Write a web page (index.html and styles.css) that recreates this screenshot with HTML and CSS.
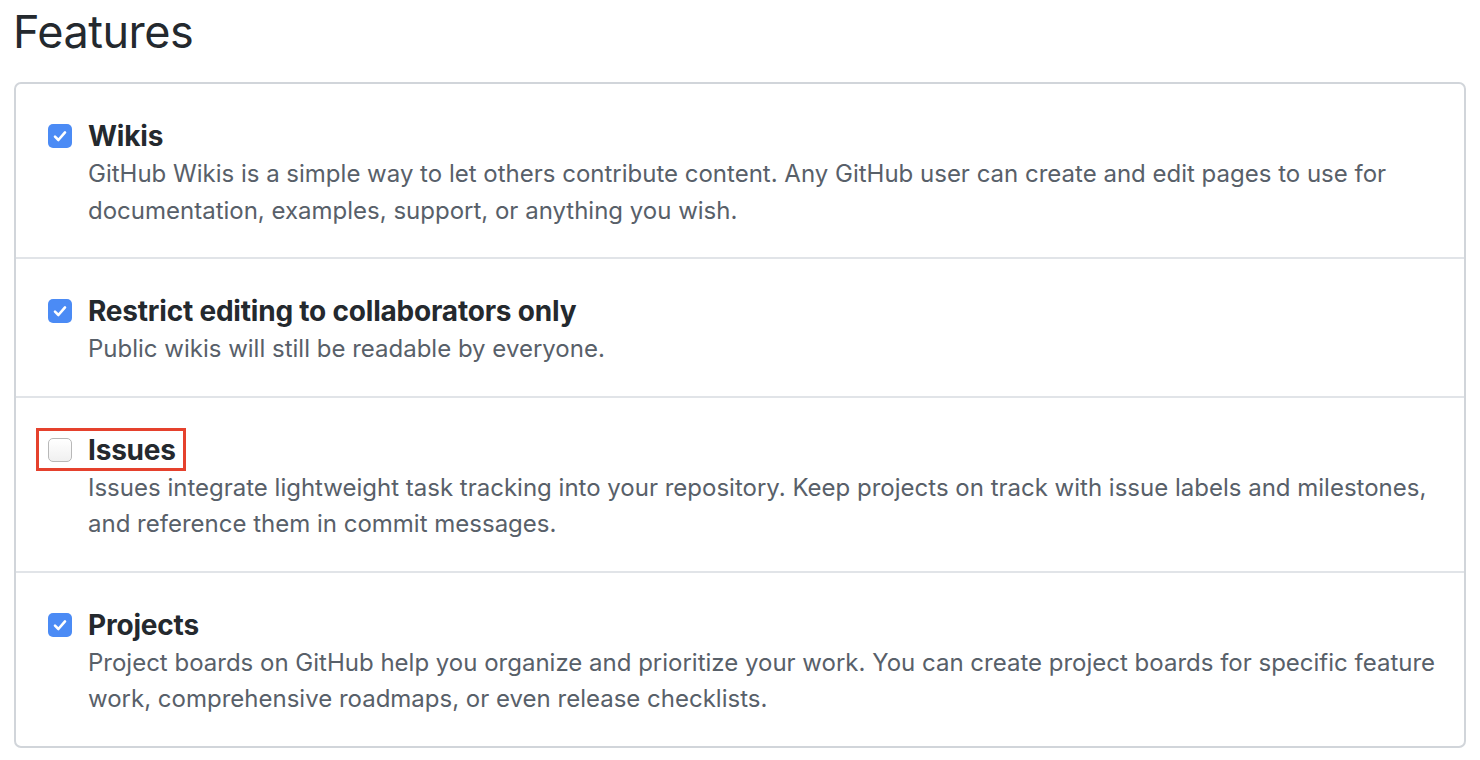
FILE: index.html
```html
<!DOCTYPE html>
<html lang="en">
	<head>
		<meta charset="utf-8">
		<title>Features</title>
		<link rel="stylesheet" href="styles.css">
	</head>
	<body>
		<h2 class="page-title">Features</h2>
		<div class="box">
			<div class="box-row">
				<div class="check-line">
					<span class="checkbox checked"><svg viewBox="0 0 24 24"><path d="M7 12.6l3.4 3.4L17 8.4" fill="none" stroke="#fff" stroke-width="2.6" stroke-linecap="round" stroke-linejoin="round"/></svg></span>
					<label class="check-label">Wikis</label>
				</div>
				<p class="note">GitHub Wikis is a simple way to let others contribute content. Any GitHub user can create and edit pages to use for documentation, examples, support, or anything you wish.</p>
			</div>
			<div class="box-row">
				<div class="check-line">
					<span class="checkbox checked"><svg viewBox="0 0 24 24"><path d="M7 12.6l3.4 3.4L17 8.4" fill="none" stroke="#fff" stroke-width="2.6" stroke-linecap="round" stroke-linejoin="round"/></svg></span>
					<label class="check-label">Restrict editing to collaborators only</label>
				</div>
				<p class="note">Public wikis will still be readable by everyone.</p>
			</div>
			<div class="box-row">
				<div class="check-line">
					<span class="highlight"></span>
					<span class="checkbox"></span>
					<label class="check-label">Issues</label>
				</div>
				<p class="note">Issues integrate lightweight task tracking into your repository. Keep projects on track with issue labels and milestones, and reference them in commit messages.</p>
			</div>
			<div class="box-row">
				<div class="check-line">
					<span class="checkbox checked"><svg viewBox="0 0 24 24"><path d="M7 12.6l3.4 3.4L17 8.4" fill="none" stroke="#fff" stroke-width="2.6" stroke-linecap="round" stroke-linejoin="round"/></svg></span>
					<label class="check-label">Projects</label>
				</div>
				<p class="note">Project boards on GitHub help you organize and prioritize your work. You can create project boards for specific feature work, comprehensive roadmaps, or even release checklists.</p>
			</div>
		</div>
	</body>
</html>
```
FILE: styles.css
```css
body {
	margin: 0;
	padding: 0 14px;
	background-color: #ffffff;
	color: #24292e;
	font-family: Inter, "Liberation Sans", sans-serif;
}

.page-title {
	margin: 0;
	padding-top: 6px;
	height: 76px;
	font-size: 45px;
	font-weight: 400;
	line-height: 52px;
	letter-spacing: -0.5px;
	text-indent: -1px;
}

.box {
	width: 1448px;
	border: 2px solid #d1d5da;
	border-radius: 7px;
}

.box-row {
	padding: 32px 24px 28px 32px;
	border-top: 2px solid #e1e4e8;
}

.box-row:first-child {
	border-top: 0;
}

.check-line {
	position: relative;
	display: flex;
	align-items: center;
	height: 40px;
}

.checkbox {
	display: flex;
	align-items: center;
	justify-content: center;
	box-sizing: border-box;
	width: 24px;
	height: 24px;
	margin-right: 16px;
	border: 1px solid #b8b8b8;
	border-radius: 5px;
	background: linear-gradient(#ffffff, #f0f0f0);
}

.checkbox.checked {
	border: 0;
	background: #4b8bf5;
}

.checkbox svg {
	width: 24px;
	height: 24px;
}

.check-label {
	font-size: 28px;
	font-weight: 700;
	letter-spacing: -0.2px;
}

.highlight {
	position: absolute;
	left: -12px;
	top: -2px;
	width: 150px;
	height: 43px;
	box-sizing: border-box;
	border: 3px solid #e5412d;
}

.note {
	margin: 0 0 0 40px;
	font-size: 24px;
	line-height: 36.5px;
	color: #586069;
}
```
